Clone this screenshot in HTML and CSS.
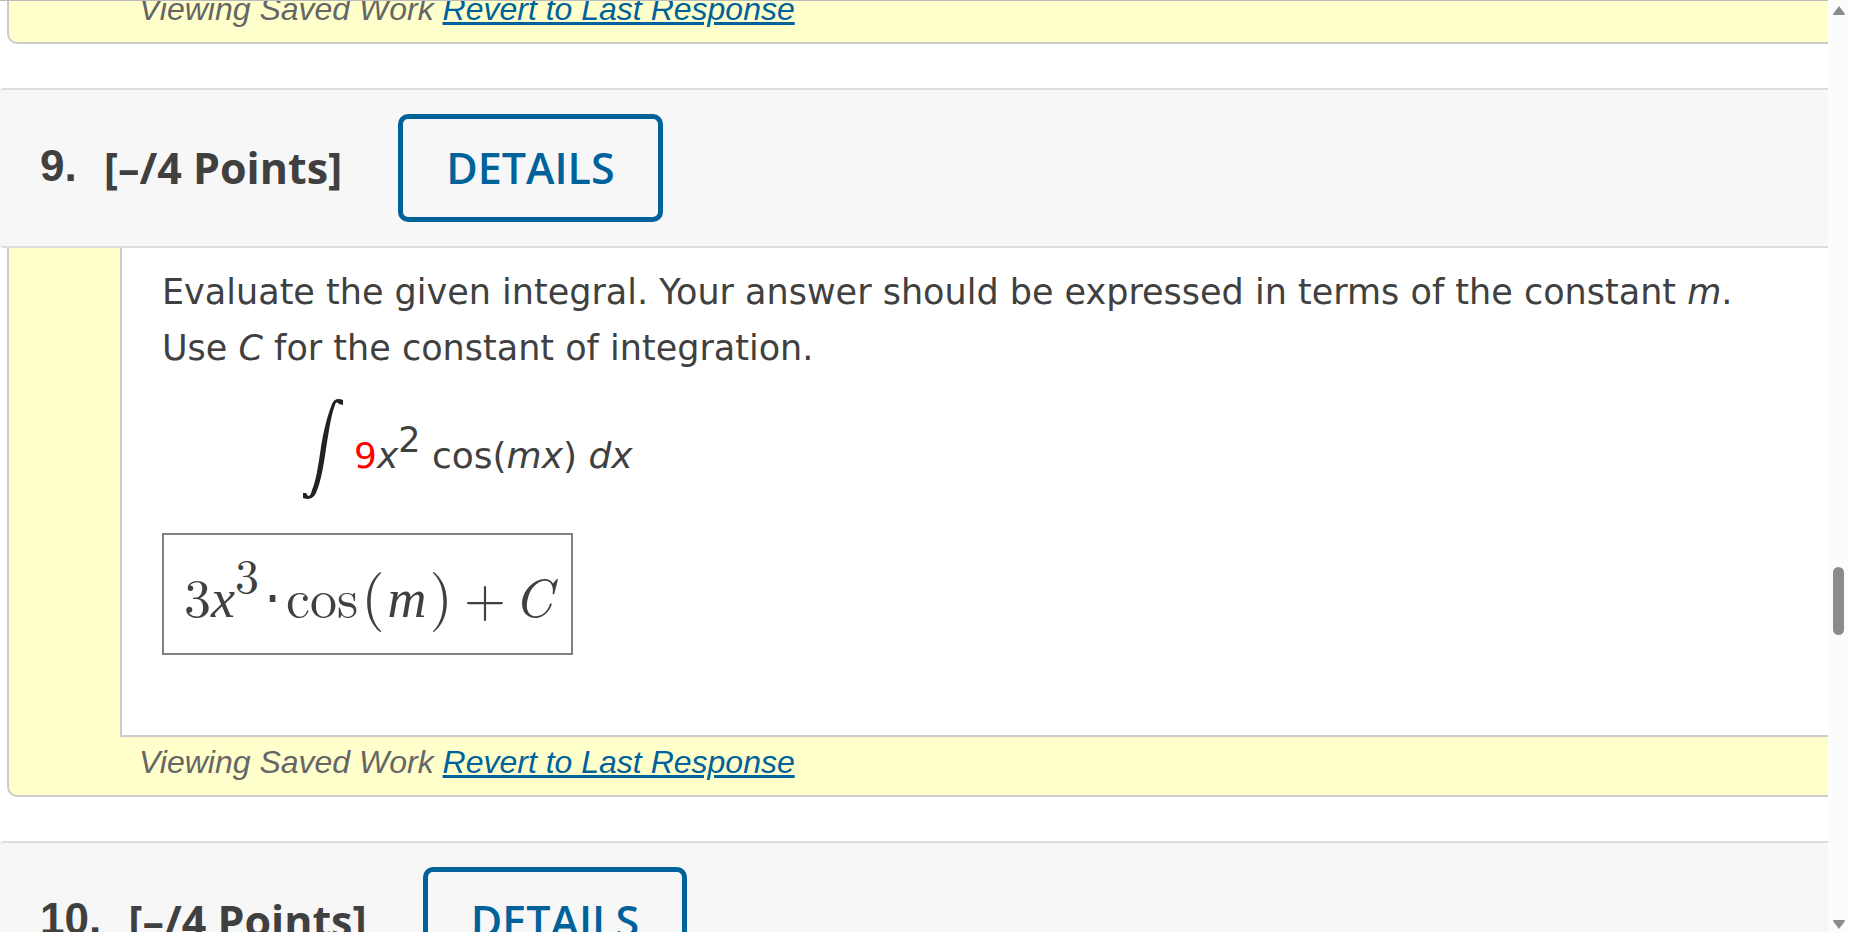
FILE: index.html
```html
<!DOCTYPE html>
<html lang="en">
<head>
  <meta charset="UTF-8" />
  <meta name="viewport" content="width=device-width, initial-scale=1.0"/>
  <title>Integration Homework</title>
  <link rel="stylesheet" href="styles.css">
</head>
<body>
  <main class="assignment">
    <section class="response previous">
      <div class="saved">Viewing Saved Work <a href="#">Revert to Last Response</a></div>
    </section>

    <header class="question-header">
      <span class="number">9.</span>
      <h2 class="points">[–/4 Points]</h2>
      <button class="details" type="button">DETAILS</button>
    </header>

    <section class="response">
      <div class="question">
        <p>Evaluate the given integral. Your answer should be expressed in terms of the constant <i>m</i>.<br>Use <i>C</i> for the constant of integration.</p>

        <div class="integral">
          <svg class="integral-sign" viewBox="0 0 42 100" aria-label="integral">
            <path d="M41 1 C36 -1 32 0 30 5 C25 18 22 30 19 48 C16 68 14 82 10 91 C9 95 8 97 6 97 L4 94 L1 94 L1 99 C7 101 11 100 14 94 C19 82 21 70 24 50 C27 31 29 17 33 6 C34 3 35 3 37 5 L41 6 Z"/>
          </svg>
          <span class="integrand"><span class="coef">9</span><i>x</i><sup>2</sup> cos(<i>mx</i>) <i>dx</i></span>
        </div>

        <div class="answer">
          <span>3<i class="var">x</i><sup>3</sup></span>
          <span class="dot">⋅</span>
          <span>cos</span>
          <span class="paren">(</span>
          <i class="var">m</i>
          <span class="paren">)</span>
          <span class="plus">+</span>
          <i>C</i>
        </div>
      </div>
      <div class="saved">Viewing Saved Work <a href="#">Revert to Last Response</a></div>
    </section>

    <header class="question-header">
      <span class="number">10.</span>
      <h2 class="points">[–/4 Points]</h2>
      <button class="details" type="button">DETAILS</button>
    </header>
  </main>

  <div class="scrollbar">
    <svg class="arrow" viewBox="0 0 12 10"><path d="M6 0 L12 8 Q12 9 11 9 L1 9 Q0 9 0 8 Z"/></svg>
    <div class="track"><div class="thumb"></div></div>
    <svg class="arrow" viewBox="0 0 12 10"><path d="M6 10 L12 2 Q12 1 11 1 L1 1 Q0 1 0 2 Z"/></svg>
  </div>
</body>
</html>
```
FILE: styles.css
```css
* {
  box-sizing: border-box;
}

body {
  margin: 0;
  height: 100vh;
  display: flex;
  overflow: hidden;
  background: #fff;
  color: #404040;
}

.assignment {
  flex: 1;
  min-width: 0;
  overflow: hidden;
  border-top: 1px solid #bbb;
}

.response {
  margin: 0 0 44px 7px;
  background: #ffffcc;
  border: 2px solid #ccc;
  border-top: none;
  border-right: none;
  border-bottom-left-radius: 10px;
}

.previous {
  height: 43px;
  display: flex;
  align-items: flex-end;
  overflow: hidden;
}

.saved {
  padding: 6px 0 14px 130px;
  font: italic 32px/38px "Liberation Sans", Arial, sans-serif;
  color: #666;
}

a {
  color: #00629b;
}

.question-header {
  display: flex;
  align-items: center;
  padding: 24px 0 24px 40px;
  background: #f7f7f7;
  border: 2px solid #ddd;
  border-left: none;
  border-right: none;
  border-radius: 4px 0 0 4px;
}

.number {
  font: bold 44px/60px "Liberation Sans", Arial, sans-serif;
  padding-bottom: 4px;
}

.points {
  margin: 0 56px 0 27px;
  font: bold 43px/60px "Open Sans", sans-serif;
}

.details {
  height: 108px;
  padding: 0 43px;
  background: transparent;
  border: 5px solid #00629b;
  border-radius: 10px;
  color: #00629b;
  font: 600 43px/60px "Open Sans", sans-serif;
}

.question {
  margin-left: 111px;
  min-height: 489px;
  padding: 16px 40px 80px;
  background: #fff;
  border-left: 2px solid #ccc;
  border-bottom: 2px solid #ccc;
  font: 35px/56px Verdana, "DejaVu Sans", sans-serif;
}

.question p {
  margin: 0;
}

.integral {
  display: flex;
  align-items: center;
  gap: 10px;
  margin: 23px 0 34px 140px;
}

.integral-sign {
  width: 42px;
  height: 100px;
  fill: #222;
}

.integrand {
  padding-top: 14px;
  font-size: 36px;
}

.coef {
  color: #f00;
}

sup {
  font-size: 35px;
  line-height: 0;
  vertical-align: 16px;
}

.answer {
  display: flex;
  align-items: baseline;
  width: fit-content;
  height: 122px;
  padding: 27px 18px 0 20px;
  border: 2px solid #808080;
  font: 54px/60px "Latin Modern Roman", "Liberation Serif", serif;
}

.answer sup {
  font-size: 48px;
  vertical-align: 24px;
}

.var {
  font-family: "Liberation Serif", serif;
}

.dot {
  padding: 0 5px;
}

.plus {
  padding: 0 8px;
}

.paren {
  padding: 0 3px;
  font-size: 60px;
}

.scrollbar {
  width: 21px;
  display: flex;
  flex-direction: column;
  align-items: center;
  padding: 6px 0 3px;
  background: #fcfcfc;
}

.arrow {
  width: 12px;
  height: 10px;
  fill: #8b8b8b;
}

.track {
  flex: 1;
  display: flex;
  flex-direction: column;
  padding-top: 551px;
}

.thumb {
  width: 11px;
  height: 68px;
  border-radius: 6px;
  background: #8b8b8b;
}
```
